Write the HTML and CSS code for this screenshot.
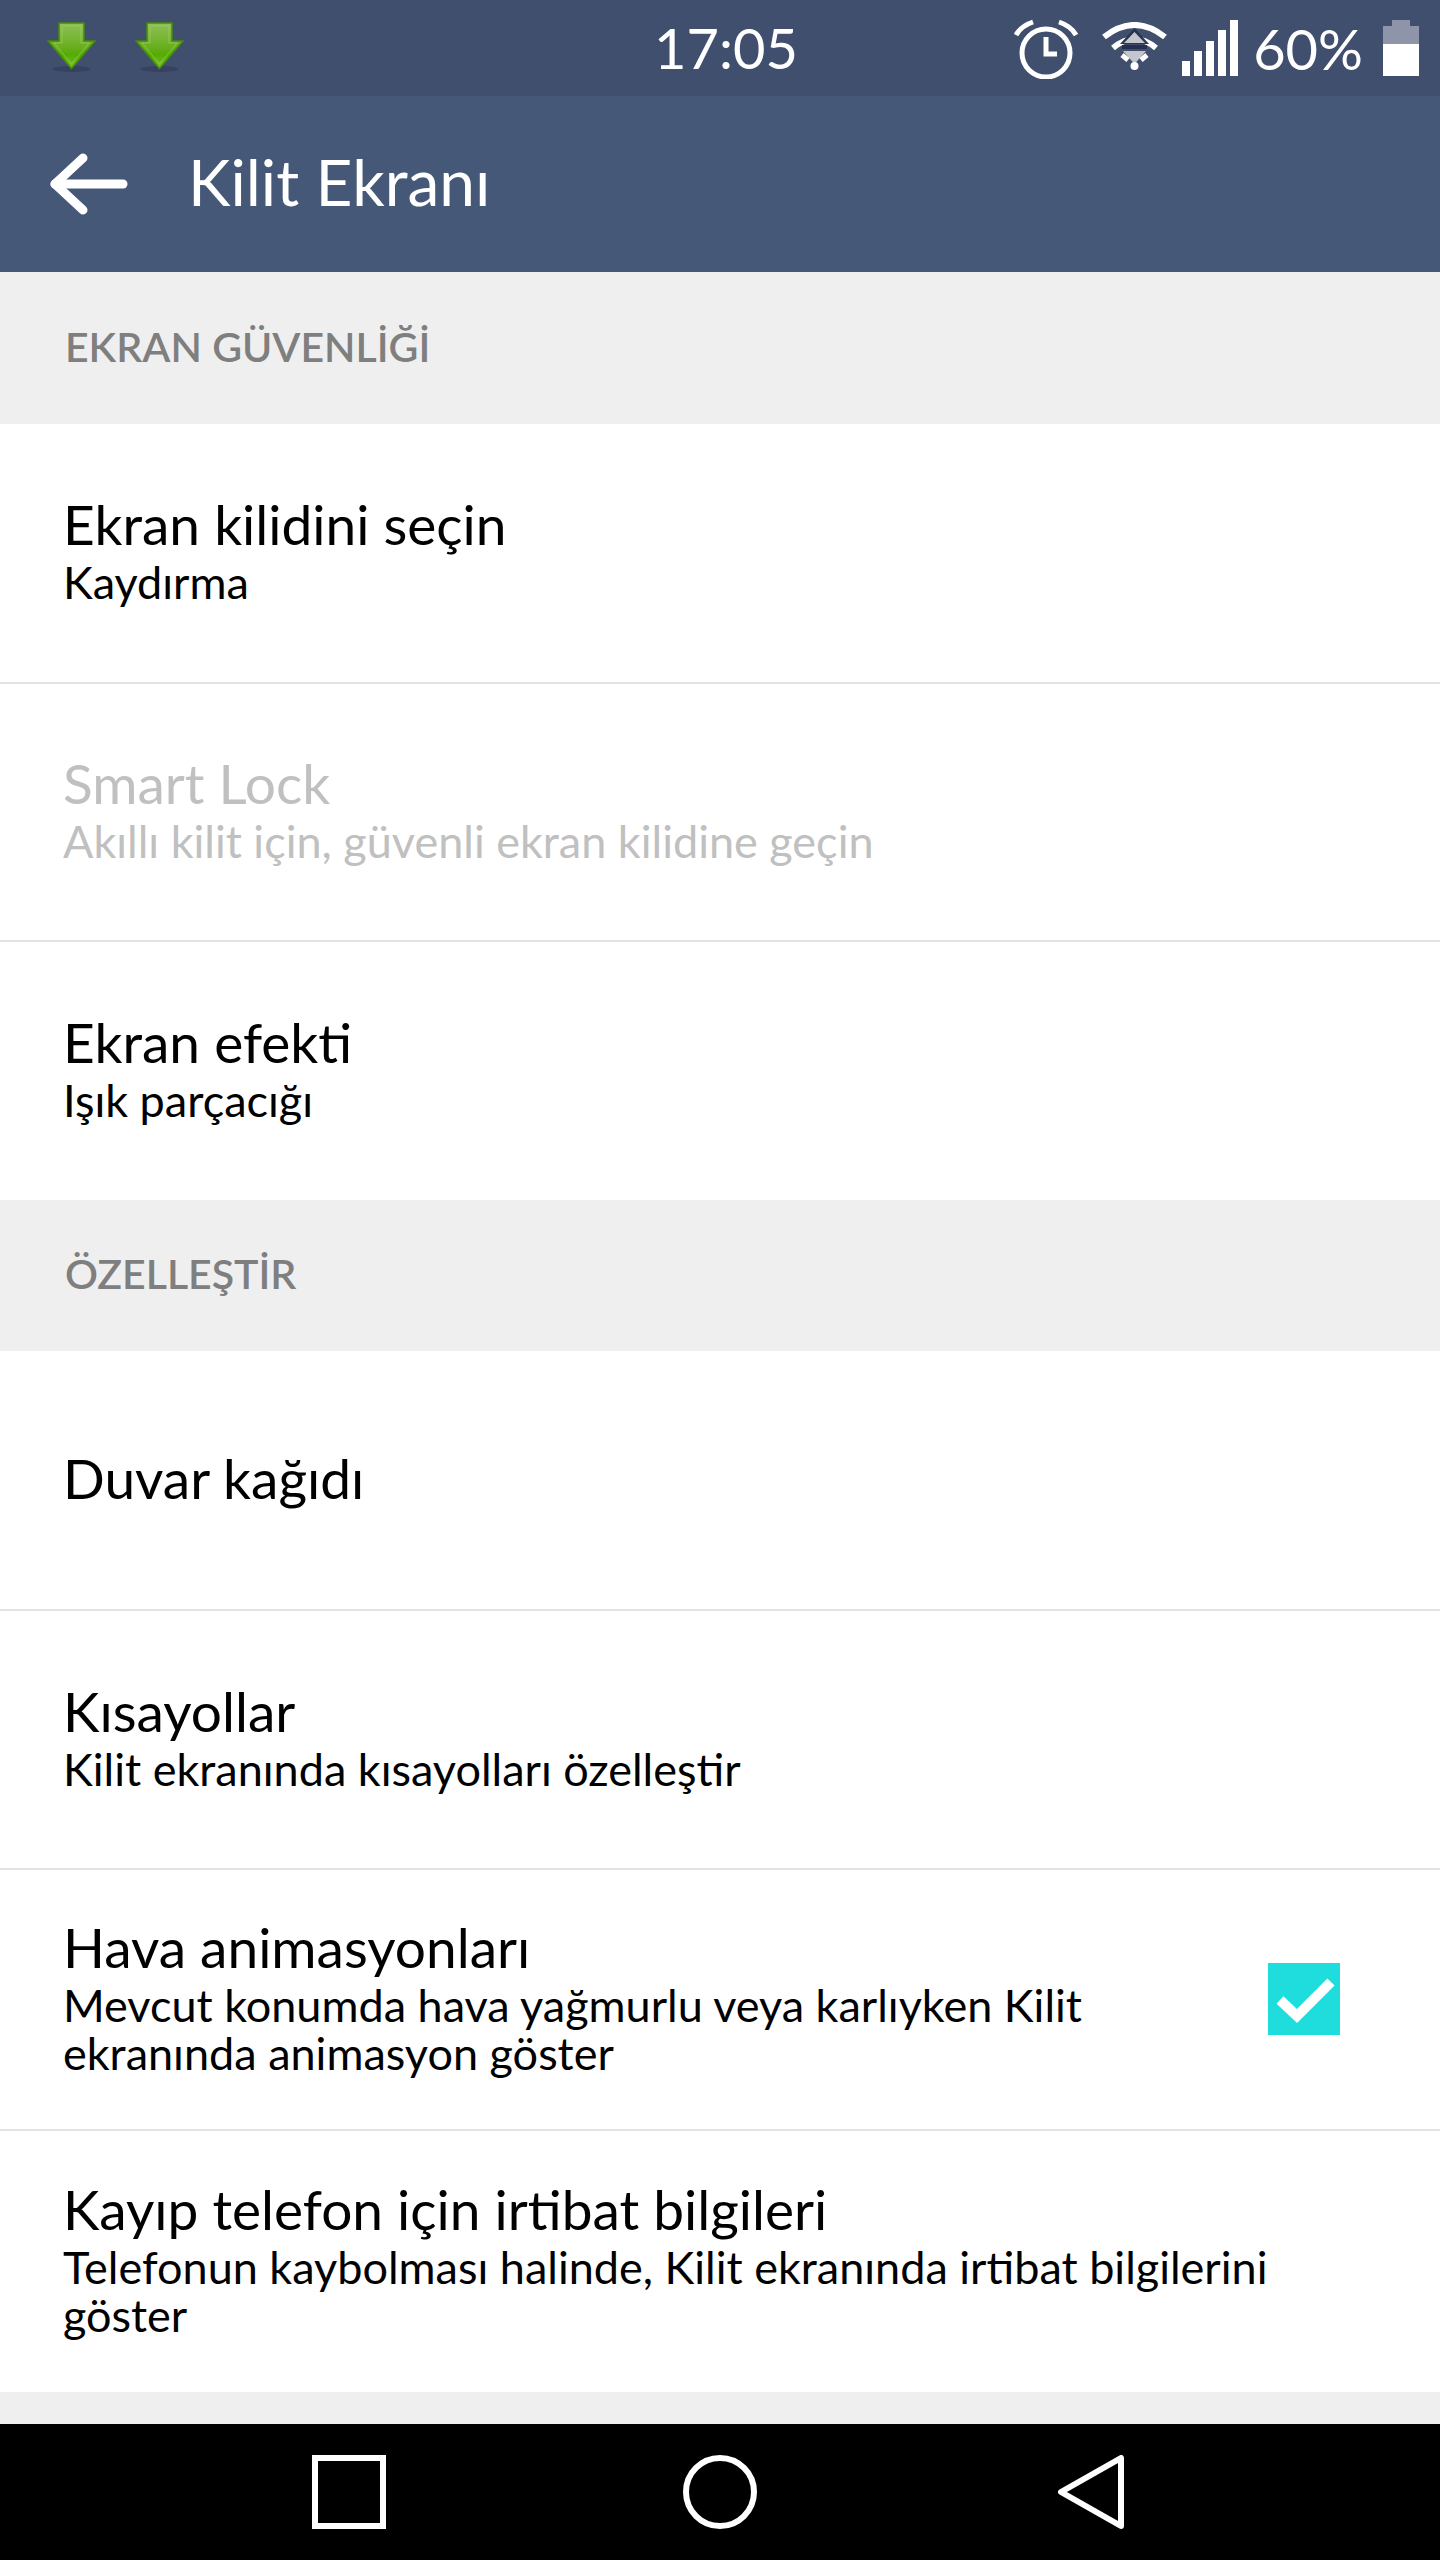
FILE: index.html
```html
<!DOCTYPE html>
<html lang="tr">
<head>
    <meta charset="UTF-8">
    <meta name="viewport" content="width=device-width, initial-scale=1.0">
    <title>Kilit Ekranı</title>
    <link rel="stylesheet" href="styles.css">
</head>
<body>
    <div class="phone">
        <div class="status-bar">
            <div class="status-left">
                <svg class="dl-icon" viewBox="0 0 49 50">
                    <defs>
                        <linearGradient id="dlg" x1="0" y1="0" x2="0" y2="1">
                            <stop offset="0" stop-color="#8fbf58"/>
                            <stop offset="0.5" stop-color="#6cb022"/>
                            <stop offset="0.7" stop-color="#56aa06"/>
                            <stop offset="1" stop-color="#79c41e"/>
                        </linearGradient>
                    </defs>
                    <ellipse cx="24.500" cy="47" rx="19" ry="3" fill="#36425f"/>
                    <path d="M12 1H37V19H48L24.500 46.500L1 19H12Z" fill="url(#dlg)" stroke="#468a0c" stroke-width="1.500"/>
                    <path d="M15 4H34V21H42L24.500 42L7 21L15 21Z" fill="none" stroke="#a3d070" stroke-width="1" opacity="0.6"/>
                </svg>
                <svg class="dl-icon" viewBox="0 0 49 50">
                    <ellipse cx="24.500" cy="47" rx="19" ry="3" fill="#36425f"/>
                    <path d="M12 1H37V19H48L24.500 46.500L1 19H12Z" fill="url(#dlg)" stroke="#468a0c" stroke-width="1.500"/>
                    <path d="M15 4H34V21H42L24.500 42L7 21L15 21Z" fill="none" stroke="#a3d070" stroke-width="1" opacity="0.6"/>
                </svg>
            </div>
            <div class="clock">17:05</div>
            <div class="status-right">
                <svg class="alarm" viewBox="0 0 64 60" fill="none" stroke="#fff">
                    <circle cx="32" cy="34" r="24" stroke-width="5"/>
                    <path d="M32 18V35H43" stroke-width="5"/>
                    <path d="M2 16Q7 7 19 3" stroke-width="5"/>
                    <path d="M62 16Q57 7 45 3" stroke-width="5"/>
                </svg>
                <svg class="wifi" viewBox="0 0 67 48" fill="none">
                    <path d="M3 15Q33.500 -9 64 15" stroke="#fff" stroke-width="6"/>
                    <path d="M12 26Q33.500 8 55 26" stroke="#fff" stroke-width="6"/>
                    <path d="M33.500 6L48 22H19Z" fill="#2b3550"/>
                    <path d="M33.500 10L44 21H23Z" fill="#c3c6cd"/>
                    <path d="M21 23H46V27H21Z" fill="#26304d"/>
                    <path d="M22 29H45L33.500 42Z" fill="#c3c6cd"/>
                    <path d="M21 33L27 38" stroke="#fff" stroke-width="5"/>
                    <path d="M46 33L40 38" stroke="#fff" stroke-width="5"/>
                    <circle cx="33.500" cy="44" r="4" fill="#fff"/>
                </svg>
                <div class="signal">
                    <span class="bar bar-1"></span>
                    <span class="bar bar-2"></span>
                    <span class="bar bar-3"></span>
                    <span class="bar bar-4"></span>
                    <span class="bar bar-5"></span>
                </div>
                <div class="battery-text">60%</div>
                <div class="battery">
                    <div class="battery-nub"></div>
                    <div class="battery-empty"></div>
                    <div class="battery-full"></div>
                </div>
            </div>
        </div>

        <div class="app-bar">
            <svg class="back" viewBox="0 0 78 62" fill="none" stroke="#fff" stroke-width="9" stroke-linecap="round" stroke-linejoin="round">
                <path d="M33 5L5 31L33 57"/>
                <path d="M5 31H73"/>
            </svg>
            <div class="app-title">Kilit Ekranı</div>
        </div>

        <div class="section-head">EKRAN GÜVENLİĞİ</div>
        <div class="row h260">
            <div class="row-text">
                <div class="row-title">Ekran kilidini seçin</div>
                <div class="row-sub">Kaydırma</div>
            </div>
        </div>
        <div class="row disabled">
            <div class="row-text">
                <div class="row-title">Smart Lock</div>
                <div class="row-sub">Akıllı kilit için, güvenli ekran kilidine geçin</div>
            </div>
        </div>
        <div class="row last">
            <div class="row-text">
                <div class="row-title">Ekran efekti</div>
                <div class="row-sub">Işık parçacığı</div>
            </div>
        </div>

        <div class="section-head second">ÖZELLEŞTİR</div>
        <div class="row h260 single">
            <div class="row-text">
                <div class="row-title">Duvar kağıdı</div>
            </div>
        </div>
        <div class="row h259">
            <div class="row-text">
                <div class="row-title">Kısayollar</div>
                <div class="row-sub">Kilit ekranında kısayolları özelleştir</div>
            </div>
        </div>
        <div class="row h261">
            <div class="row-text narrow">
                <div class="row-title">Hava animasyonları</div>
                <div class="row-sub">Mevcut konumda hava yağmurlu veya karlıyken Kilit ekranında animasyon göster</div>
            </div>
            <div class="check">
                <svg viewBox="0 0 72 72" fill="none" stroke="#fff" stroke-width="10">
                    <path d="M12 37L29 53L63 19"/>
                </svg>
            </div>
        </div>
        <div class="row h261 last">
            <div class="row-text">
                <div class="row-title">Kayıp telefon için irtibat bilgileri</div>
                <div class="row-sub">Telefonun kaybolması halinde, Kilit ekranında irtibat bilgilerini göster</div>
            </div>
        </div>

        <div class="spacer"></div>

        <div class="nav-bar">
            <svg class="nav-icon" viewBox="0 0 74 74" fill="none" stroke="#fff" stroke-width="6">
                <path d="M3 3H71V71H3Z"/>
            </svg>
            <svg class="nav-icon" viewBox="0 0 74 74" fill="none" stroke="#fff" stroke-width="6">
                <circle cx="37" cy="37" r="34"/>
            </svg>
            <svg class="nav-icon" viewBox="0 0 74 74" fill="none" stroke="#fff" stroke-width="6" stroke-linejoin="round">
                <path d="M67 3V71L7 37Z"/>
            </svg>
        </div>
    </div>
</body>
</html>
```

FILE: styles.css
```css
* {
    box-sizing: border-box;
}

body {
    margin: 0;
    background: #fff;
    font-family: "Lato", "Noto Sans", sans-serif;
    color: #000;
}

.phone {
    width: 1440px;
    height: 2560px;
    display: flex;
    flex-direction: column;
    overflow: hidden;
}

/* status bar */
.status-bar {
    height: 96px;
    background: #414f6e;
    color: #fff;
    display: grid;
    grid-template-columns: 1fr auto 1fr;
    align-items: center;
    padding: 0 21px 0 47px;
}

.status-left {
    display: flex;
    gap: 39px;
    align-items: center;
}

.dl-icon {
    width: 49px;
    height: 50px;
    margin-bottom: 2px;
}

.clock {
    font-size: 56px;
    margin-top: -2px;
    margin-right: 14px;
}

.status-right {
    display: flex;
    align-items: center;
    justify-content: flex-end;
}

.alarm {
    width: 64px;
    height: 60px;
    margin-top: 2px;
}

.wifi {
    width: 67px;
    height: 48px;
    margin-left: 23px;
    margin-bottom: 4px;
}

.signal {
    display: flex;
    align-items: flex-end;
    gap: 4px;
    height: 56px;
    margin-left: 14px;
}

.bar {
    width: 8px;
    background: #fff;
}

.bar-1 { height: 15px; }
.bar-2 { height: 25px; }
.bar-3 { height: 35px; }
.bar-4 { height: 46px; }
.bar-5 { height: 56px; }

.battery-text {
    font-size: 56px;
    margin-left: 15px;
}

.battery {
    width: 36px;
    height: 56px;
    margin-left: 20px;
    display: flex;
    flex-direction: column;
    align-items: center;
}

.battery-nub {
    width: 18px;
    height: 6px;
    background: #8e95a8;
}

.battery-empty {
    width: 36px;
    height: 18px;
    background: #8e95a8;
}

.battery-full {
    width: 36px;
    height: 32px;
    background: #fff;
}

/* app bar */
.app-bar {
    height: 176px;
    background: #465877;
    display: flex;
    align-items: center;
    padding-left: 50px;
}

.back {
    width: 78px;
    height: 62px;
}

.app-title {
    color: #fff;
    font-size: 64px;
    margin-left: 60px;
    margin-bottom: 6px;
}

/* list */
.section-head {
    height: 152px;
    background: #efefef;
    color: #7f7f7f;
    font-size: 41px;
    font-weight: 600;
    display: flex;
    align-items: center;
    padding: 0 0 4px 65px;
}

.section-head.second {
    height: 151px;
}

.row {
    height: 258px;
    background: #fff;
    border-bottom: 2px solid #e3e3e3;
    display: flex;
    align-items: center;
    padding: 0 100px 8px 63px;
}

.row.h259 { height: 259px; }
.row.h260 { height: 260px; }
.row.h261 { height: 261px; }

.row.single {
    padding-bottom: 2px;
}

.row.last {
    border-bottom: 0;
}

.row-text {
    flex: 1;
    padding-right: 40px;
}

.row-text.narrow {
    padding-right: 100px;
}

.row-title {
    font-size: 55px;
    line-height: 64px;
    margin-bottom: 2px;
}

.row-sub {
    font-size: 45px;
    line-height: 48px;
}

.disabled {
    color: #c0c0c0;
}

.check {
    width: 72px;
    height: 72px;
    margin-top: 7px;
    background: #1fdddd;
}

.check svg {
    display: block;
}

.spacer {
    flex: 1;
    background: #efefef;
}

/* bottom nav */
.nav-bar {
    height: 136px;
    background: #000;
    display: flex;
    align-items: center;
    padding-left: 312px;
    gap: 297px;
}

.nav-icon {
    width: 74px;
    height: 74px;
}
```
